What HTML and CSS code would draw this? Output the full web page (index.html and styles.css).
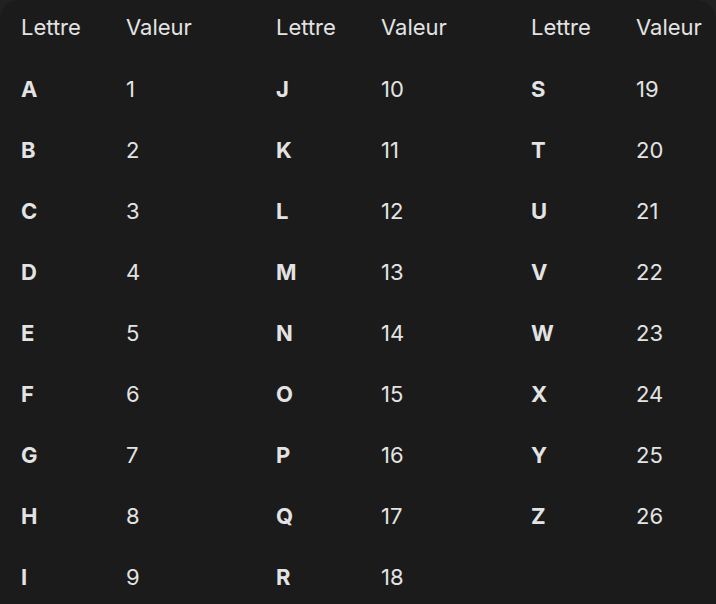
FILE: index.html
```html
<!DOCTYPE html>
<html lang="fr">
<head>
<meta charset="utf-8">
<link rel="stylesheet" href="styles.css">
</head>
<body>
<div class="panel">
  <table class="tbl">
    <thead><tr><th>Lettre</th><th>Valeur</th></tr></thead>
    <tbody>
      <tr><td class="l">A</td><td>1</td></tr>
      <tr><td class="l">B</td><td>2</td></tr>
      <tr><td class="l">C</td><td>3</td></tr>
      <tr><td class="l">D</td><td>4</td></tr>
      <tr><td class="l">E</td><td>5</td></tr>
      <tr><td class="l">F</td><td>6</td></tr>
      <tr><td class="l">G</td><td>7</td></tr>
      <tr><td class="l">H</td><td>8</td></tr>
      <tr><td class="l">I</td><td>9</td></tr>
    </tbody>
  </table>
  <table class="tbl">
    <thead><tr><th>Lettre</th><th>Valeur</th></tr></thead>
    <tbody>
      <tr><td class="l">J</td><td>10</td></tr>
      <tr><td class="l">K</td><td>11</td></tr>
      <tr><td class="l">L</td><td>12</td></tr>
      <tr><td class="l">M</td><td>13</td></tr>
      <tr><td class="l">N</td><td>14</td></tr>
      <tr><td class="l">O</td><td>15</td></tr>
      <tr><td class="l">P</td><td>16</td></tr>
      <tr><td class="l">Q</td><td>17</td></tr>
      <tr><td class="l">R</td><td>18</td></tr>
    </tbody>
  </table>
  <table class="tbl">
    <thead><tr><th>Lettre</th><th>Valeur</th></tr></thead>
    <tbody>
      <tr><td class="l">S</td><td>19</td></tr>
      <tr><td class="l">T</td><td>20</td></tr>
      <tr><td class="l">U</td><td>21</td></tr>
      <tr><td class="l">V</td><td>22</td></tr>
      <tr><td class="l">W</td><td>23</td></tr>
      <tr><td class="l">X</td><td>24</td></tr>
      <tr><td class="l">Y</td><td>25</td></tr>
      <tr><td class="l">Z</td><td>26</td></tr>
    </tbody>
  </table>
</div>
</body>
</html>
```
FILE: styles.css
```css
html, body {
  margin: 0;
  padding: 0;
  background: #212121;
  height: 100%;
  overflow: hidden;
}
.panel {
  display: flex;
  align-items: flex-start;
  background: #1b1b1b;
  border-radius: 20px 20px 0 0;
  min-height: 640px;
  font-family: Inter, "Noto Sans", sans-serif;
  color: #e3e3e3;
}
.tbl {
  flex: 0 0 255px;
  width: 255px;
  border-collapse: collapse;
  table-layout: fixed;
}
.tbl th, .tbl td {
  padding: 0 0 0 21px;
  text-align: left;
  vertical-align: middle;
  font-size: 22px;
  box-sizing: border-box;
  white-space: nowrap;
}
.tbl th:first-child, .tbl td:first-child {
  width: 105px;
}
.tbl th {
  font-weight: 400;
  height: 58px;
  padding-bottom: 4px;
}
.tbl td {
  height: 61px;
  font-weight: 400;
}
.tbl td.l {
  font-weight: 700;
}
```
